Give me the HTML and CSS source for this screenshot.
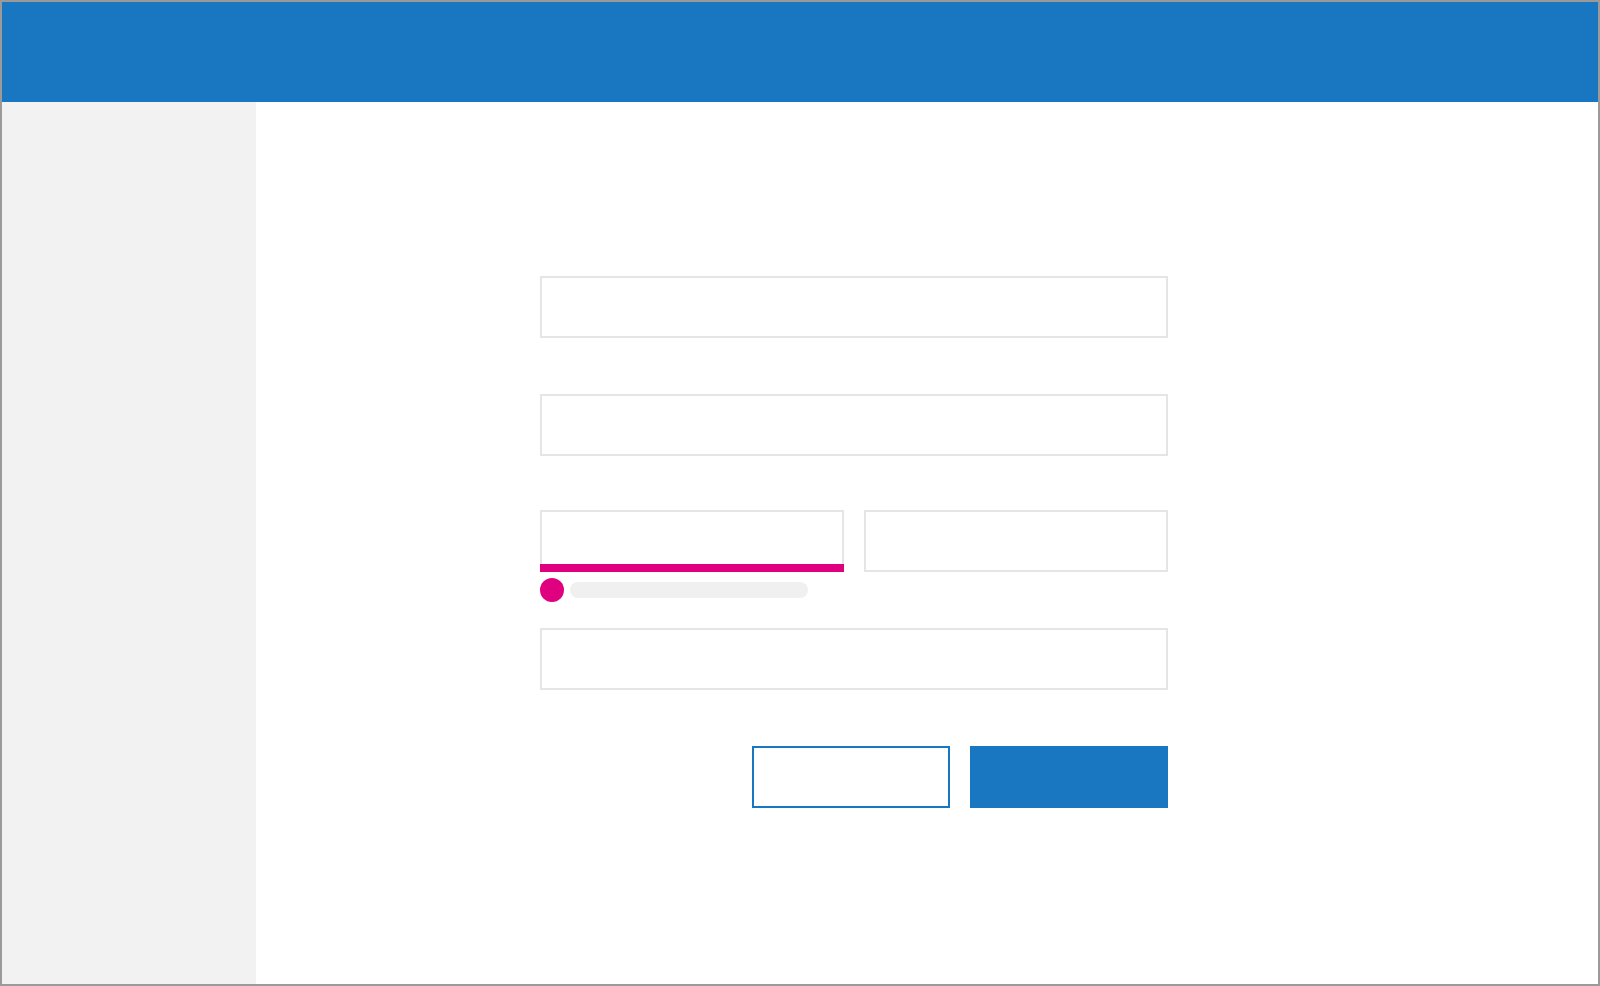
FILE: index.html
```html
<!DOCTYPE html>
<html lang="en">
<head>
<meta charset="utf-8">
<title>Form</title>
<link rel="stylesheet" href="styles.css">
</head>
<body>
<div class="frame">
  <header class="topbar"></header>
  <div class="main">
    <aside class="sidebar"></aside>
    <section class="content">
      <form class="form">
        <div class="field"></div>
        <div class="field gap-56"></div>
        <div class="row gap-54">
          <div class="col">
            <div class="field error"></div>
            <div class="error-bar"></div>
            <div class="error-msg">
              <span class="dot"></span>
              <span class="pill"></span>
            </div>
          </div>
          <div class="col">
            <div class="field"></div>
          </div>
        </div>
        <div class="field gap-26"></div>
        <div class="actions">
          <div class="btn btn-outline"></div>
          <div class="btn btn-primary"></div>
        </div>
      </form>
    </section>
  </div>
</div>
</body>
</html>
```
FILE: styles.css
```css
* { box-sizing: border-box; }
html, body { margin: 0; padding: 0; }
body {
  width: 1600px;
  height: 986px;
  font-family: "Liberation Sans", Arial, sans-serif;
  background: #ffffff;
}
.frame {
  width: 1600px;
  height: 986px;
  border: 2px solid #9a9a9a;
  display: flex;
  flex-direction: column;
}
.topbar {
  height: 100px;
  flex: 0 0 100px;
  background: #1976c0;
}
.main {
  flex: 1;
  display: flex;
}
.sidebar {
  width: 254px;
  flex: 0 0 254px;
  background: #f2f2f2;
}
.content {
  flex: 1;
  background: #ffffff;
  padding: 174px 0 0 284px;
}
.form {
  width: 628px;
  display: flex;
  flex-direction: column;
}
.field {
  height: 62px;
  border: 2px solid #e5e5e5;
  background: #ffffff;
}
.field.error {
  height: 54px;
  border-bottom: 0;
}
.error-bar {
  height: 8px;
  background: #e0007f;
}
.gap-56 { margin-top: 56px; }
.gap-54 { margin-top: 54px; }
.gap-26 { margin-top: 26px; }
.row {
  display: flex;
  gap: 20px;
}
.col {
  flex: 1;
  display: flex;
  flex-direction: column;
}
.error-msg {
  margin-top: 6px;
  display: flex;
  align-items: center;
  gap: 6px;
  height: 24px;
}
.dot {
  width: 24px;
  height: 24px;
  border-radius: 50%;
  background: #e0007f;
}
.pill {
  width: 238px;
  height: 16px;
  border-radius: 8px;
  background: #f0f0f0;
}
.actions {
  margin-top: 56px;
  display: flex;
  justify-content: flex-end;
  gap: 20px;
}
.btn {
  width: 198px;
  height: 62px;
}
.btn-outline {
  border: 2px solid #1976c0;
  background: #ffffff;
}
.btn-primary {
  background: #1976c0;
}
```
